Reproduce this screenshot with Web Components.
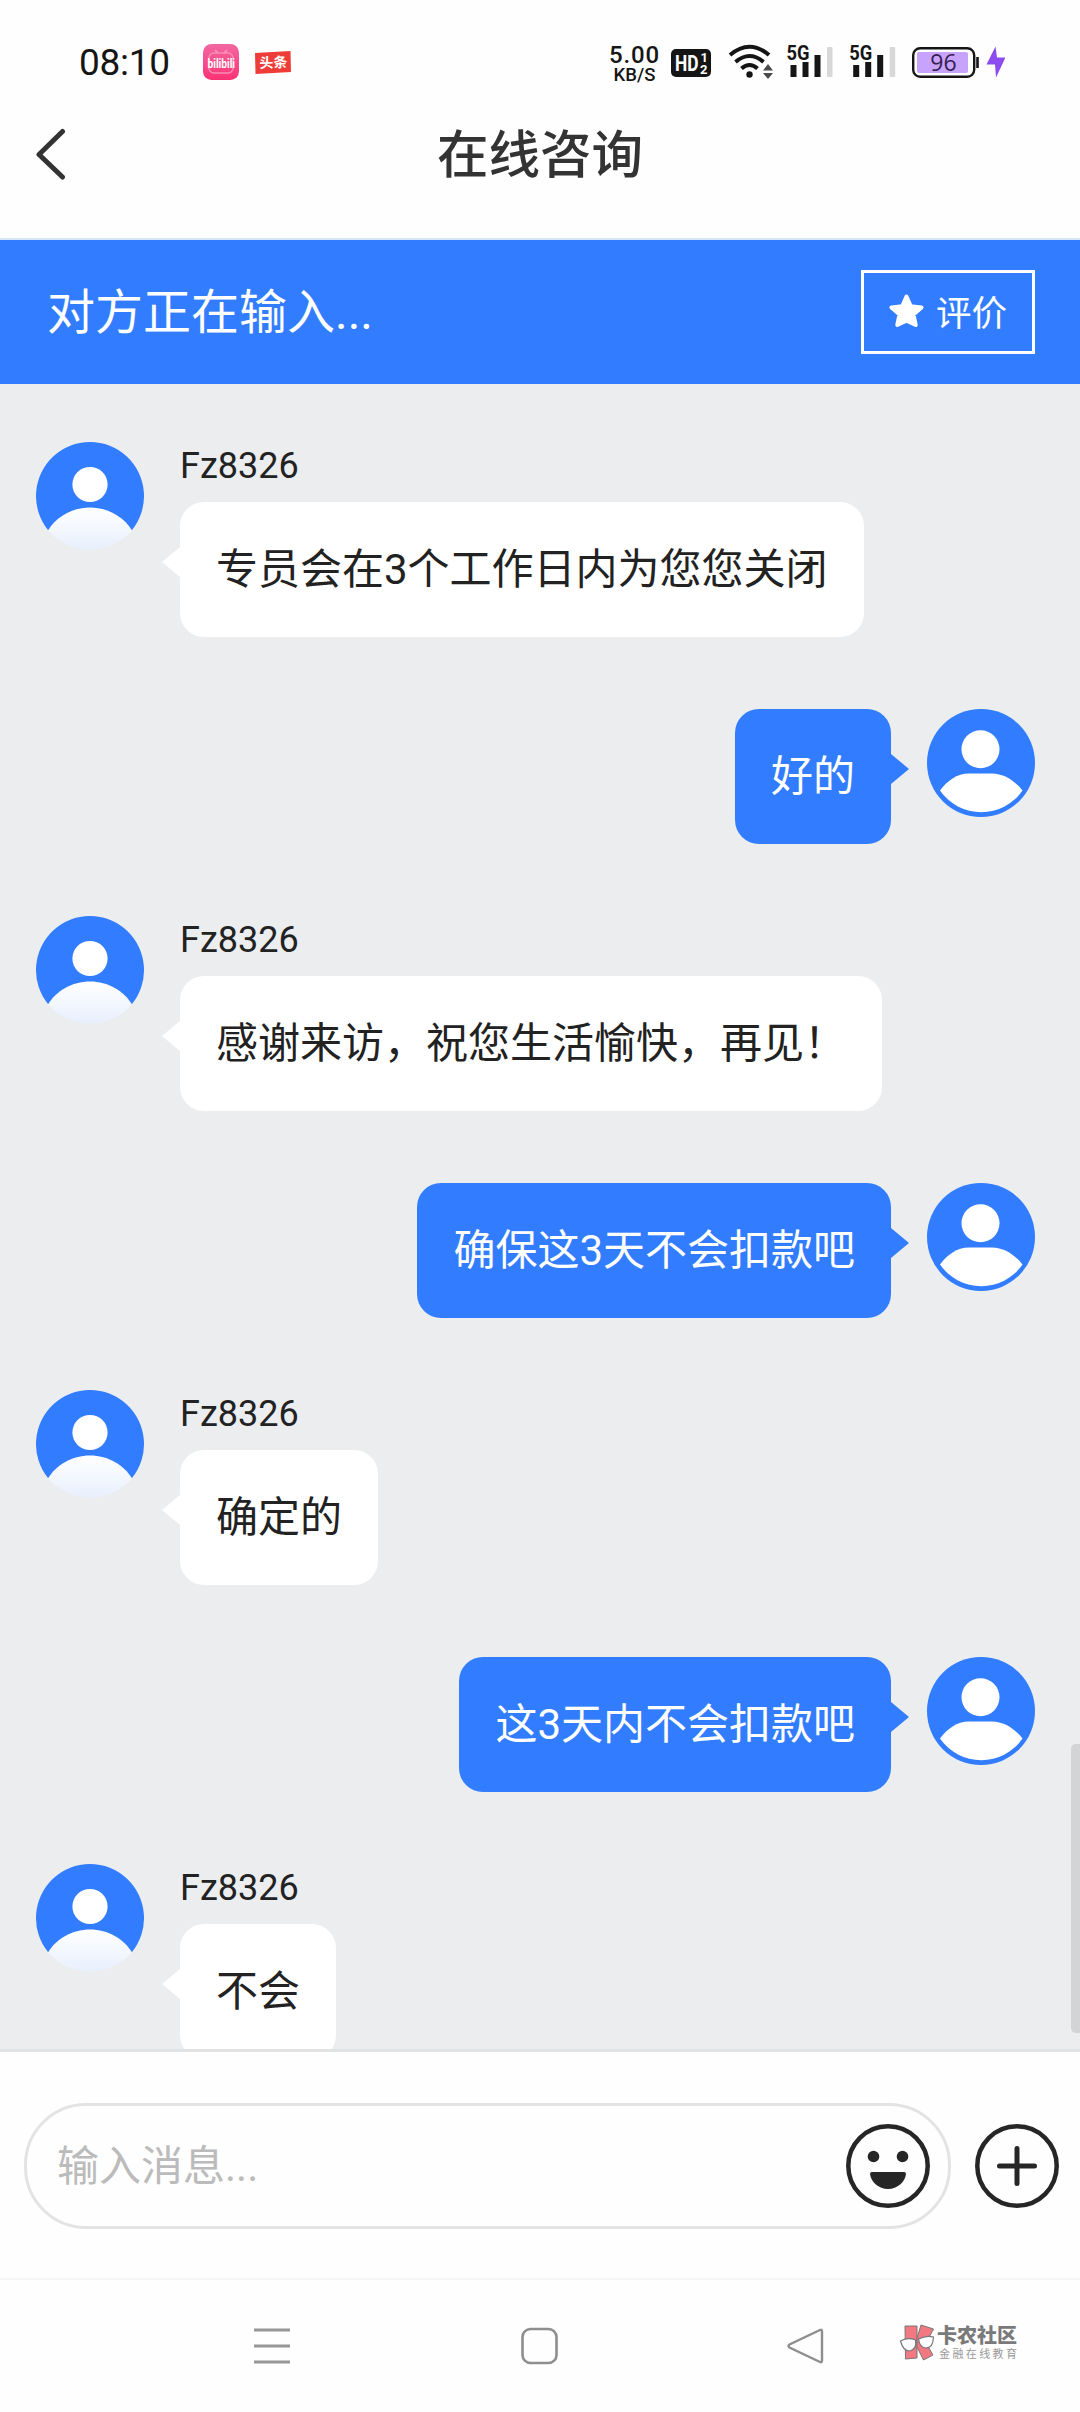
<!DOCTYPE html>
<html lang="zh-CN">
<head>
<meta charset="utf-8">
<title>在线咨询</title>
<style>
  html, body { margin: 0; padding: 0; background: #fff; }
  body { font-family: Roboto, "Noto Sans CJK SC", sans-serif; color: #222; }
</style>
</head>
<body>
<chat-app></chat-app>

<template id="t-app">
  <style>
    :host { display: flex; flex-direction: column; width: 1080px; height: 2412px; overflow: hidden; background: #fefefe; }
    main { flex: none; height: 1665px; box-sizing: border-box; padding: 58px 45px 0 36px; background: #ebedef; overflow: hidden; display: flex; flex-direction: column; gap: 72px; position: relative; }
    chat-message { flex: none; }
    .thumb { position: absolute; right: 0; top: 1360px; width: 9px; height: 289px; background: #d3d4d6; border-radius: 5px 0 0 5px; }
  </style>
  <status-bar></status-bar>
  <title-bar>在线咨询</title-bar>
  <typing-banner>对方正在输入...</typing-banner>
  <main>
    <chat-message name="Fz8326">专员会在3个工作日内为您您关闭</chat-message>
    <chat-message mine>好的</chat-message>
    <chat-message name="Fz8326">感谢来访，祝您生活愉快，再见！</chat-message>
    <chat-message mine>确保这3天不会扣款吧</chat-message>
    <chat-message name="Fz8326">确定的</chat-message>
    <chat-message mine>这3天内不会扣款吧</chat-message>
    <chat-message name="Fz8326">不会</chat-message>
    <div class="thumb"></div>
  </main>
  <message-composer></message-composer>
  <nav-bar></nav-bar>
</template>

<template id="t-status">
  <style>
    :host { display: flex; height: 124px; flex: none; box-sizing: border-box; align-items: flex-start; padding: 40px 75px 0 79px; color: #151515; }
    .time { font-size: 37px; line-height: 46px; width: 124px; letter-spacing: -.3px; }
    svg { display: block; flex: none; }
    .apps { display: flex; gap: 16px; flex: 1; padding-top: 4px; }
    .speed { width: 53px; text-align: center; font-weight: 500; padding-top: 4px; margin-right: 10px; }
    .speed div:first-child { font-size: 24px; line-height: 22px; letter-spacing: .8px; }
    .speed div:last-child { font-size: 18.5px; line-height: 18px; }
  </style>
  <div class="time">08:10</div>
  <div class="apps">
    <svg width="36" height="36" viewBox="0 0 36 36">
      <defs><linearGradient id="p" x1="0" y1="0" x2="0" y2="1"><stop offset="0" stop-color="#f268a2"/><stop offset="1" stop-color="#fb3274"/></linearGradient></defs>
      <rect width="36" height="36" rx="8.5" fill="url(#p)"/>
      <path d="M12 6l3 3M24 6l-3 3" stroke="#fa9ac0" stroke-width="1.6"/>
      <rect x="6" y="9" width="24" height="20" rx="5" fill="none" stroke="#f98bb5" stroke-width="1.4"/>
      <text transform="translate(4.500 24) scale(1 1.3)" font-size="10.500" font-weight="700" fill="#fff" textLength="27.500" lengthAdjust="spacingAndGlyphs" font-family="Roboto, sans-serif">bilibili</text>
    </svg>
    <svg width="36" height="36" viewBox="0 0 36 36">
      <path d="M0 9L35.500 7 36 28 .5 30z" fill="#ee3d38"/>
      <text x="18.300" y="23.500" text-anchor="middle" font-size="14" font-weight="700" fill="#fff" font-family="Noto Sans CJK SC, sans-serif" transform="rotate(-2 18 18)">头条</text>
    </svg>
  </div>
  <div class="speed"><div>5.00</div><div>KB/S</div></div>
  <svg width="334" height="44" viewBox="671 40 334 44">
    <rect x="671" y="49" width="40" height="28" rx="5" fill="#151515"/>
    <text x="675" y="70.500" font-size="22" font-weight="700" fill="#fff" textLength="23.500" lengthAdjust="spacingAndGlyphs" font-family="Roboto, sans-serif">HD</text>
    <g font-size="13" font-weight="700" fill="#fff" font-family="Roboto, sans-serif"><text x="700.500" y="61.500">1</text><text x="700" y="74">2</text></g>
    <g fill="none" stroke="#151515" stroke-width="4"><path d="M730 55q19.500-16.500 39 0M735.500 62q14-12 28 0M741.500 68.500q8-7 16 0"/></g>
    <circle cx="749.500" cy="74.500" r="3.200" fill="#151515"/>
    <path d="M763 70.500l5-6.500 5 6.500zM763 73l5 6 5-6z" fill="#4a4a4a"/>
    <g id="sig">
      <text x="786.500" y="60" font-size="20.500" font-weight="700" fill="#151515" textLength="23" lengthAdjust="spacingAndGlyphs" font-family="Roboto, sans-serif">5G</text>
      <path d="M790.500 65h6v12h-6zM802.500 62h6v15h-6zM814.500 55h6v22h-6z" fill="#151515"/>
      <rect x="827" y="47" width="5.500" height="30" rx="1" fill="#d8d8d8"/>
    </g>
    <use href="#sig" x="62.700"/>
    <rect x="913.200" y="48.200" width="61" height="28.600" rx="7" fill="#fff" stroke="#151515" stroke-width="2.400"/>
    <rect x="917" y="52" width="51" height="21" rx="2" fill="#c8a3fc"/>
    <path d="M977.500 57v11" stroke="#151515" stroke-width="2.600"/>
    <text x="943.500" y="71" text-anchor="middle" font-size="23" fill="#35204f" font-family="Open Sans, sans-serif">96</text>
    <path d="M995.500 46.500l-9 18h8.500l1 13 9.500-20h-8.500z" fill="#8c4cee"/>
  </svg>
</template>

<template id="t-title">
  <style>
    :host { display: flex; flex: none; height: 116px; box-sizing: border-box; border-bottom: 2px solid #d5e4f6; padding: 0 36px; align-items: flex-start; color: #333; }
    svg { display: block; width: 30px; height: 62px; }
    h1 { flex: 1; margin: 0 30px 0 0; text-align: center; font-size: 51.5px; line-height: 63px; font-weight: 500; }
  </style>
  <svg viewBox="0 0 30 62"><path d="M26.500 7.500L3 30.500 26.500 53" fill="none" stroke="#333" stroke-width="5" stroke-linecap="round" stroke-linejoin="round"/></svg>
  <h1><slot></slot></h1>
</template>

<template id="t-banner">
  <style>
    :host { display: flex; flex: none; height: 144px; box-sizing: border-box; padding: 0 45px 0 47px; align-items: center; justify-content: space-between; background: #327dff; color: #fff; font-size: 48px; }
    .status { padding-bottom: 8px; }
    button { all: unset; box-sizing: border-box; display: flex; align-items: center; width: 174px; height: 84px; border: 3px solid #fff; padding-left: 25px; gap: 12px; font-size: 35.5px; }
    button span { padding-bottom: 3px; }
    svg { display: block; width: 35px; height: 35px; margin-bottom: 2px; }
  </style>
  <span class="status"><slot></slot></span>
  <button><svg viewBox="0 0 35 35"><path d="M17.500 2.500l4.300 9.700 10.700 1.200-8 7.100 2.200 10.500-9.200-4.200-9.200 4.200 2.200-10.500-8-7.100 10.700-1.200z" fill="#fff" stroke="#fff" stroke-width="4" stroke-linejoin="round"/></svg><span>评价</span></button>
</template>

<template id="t-avatar">
  <style>
    :host { display: block; width: 108px; height: 109px; flex: none; }
    svg { display: block; }
    :host([mine]) .agent, :host(:not([mine])) .user { display: none; }
  </style>
  <svg class="agent" width="108" height="109" viewBox="0 0 108 109">
    <defs>
      <linearGradient id="g" x1="0" y1="65" x2="0" y2="109" gradientUnits="userSpaceOnUse"><stop offset="0" stop-color="#fff"/><stop offset="1" stop-color="#e7effd"/></linearGradient>
    </defs>
    <path d="M12 88A54 54 0 1 1 96 88z" fill="#327dff"/>
    <circle cx="54" cy="42.500" r="17.600" fill="#fff"/>
    <path d="M12 88.500C20 75 36 65.500 54 65.500S88 75 96 88.500A56 56 0 0 1 12 88.500z" fill="url(#g)"/>
  </svg>
  <svg class="user" width="108" height="108" viewBox="0 0 108 108">
    <circle cx="54" cy="54" r="54" fill="#327dff"/>
    <circle cx="53.500" cy="40.300" r="19" fill="#fff"/>
    <path d="M13 81.500C20 72 30 64.500 42 64.500H65C77 64.500 88 72 95.500 81.500A50 50 0 0 1 13 81.500z" fill="#fff"/>
  </svg>
</template>

<template id="t-message">
  <style>
    :host { display: flex; align-items: flex-start; gap: 36px; height: 195px; }
    :host([mine]) { flex-direction: row-reverse; height: 135px; }
    .col { display: flex; flex-direction: column; align-items: flex-start; }
    .name { height: 60px; font-size: 36px; line-height: 48px; color: #222; }
    :host([mine]) .name { display: none; }
    .bubble { position: relative; box-sizing: border-box; height: 135px; padding: 0 36px; border-radius: 24px; background: #fff; color: #222; font-size: 42px; line-height: 135px; white-space: nowrap; }
    :host([mine]) .bubble { background: #327dff; color: #fff; }
    .bubble::before { content: ""; position: absolute; top: 45px; left: -18px; border: 15px solid transparent; border-left: 0; border-right: 18px solid #fff; }
    :host([mine]) .bubble::before { left: auto; right: -18px; border-right: 0; border-left: 18px solid #327dff; }
  </style>
  <user-avatar></user-avatar>
  <div class="col"><div class="name"></div><div class="bubble"><slot></slot></div></div>
</template>

<template id="t-composer">
  <style>
    :host { display: flex; flex: none; height: 231px; box-sizing: border-box; border-top: 3px solid #e1e2e4; border-bottom: 2px solid #f6f6f6; padding: 51px 21px 0 24px; gap: 24px; align-items: flex-start; background: #fefefe; }
    .field { width: 927px; height: 126px; box-sizing: border-box; border: 3px solid #e3e3e3; border-radius: 62px; display: flex; align-items: center; justify-content: space-between; padding: 0 18px 0 30px; font-size: 42px; color: #bbb; }
    .field span { padding-bottom: 7px; }
    svg { display: block; flex: none; width: 84px; height: 84px; }
    .plus { margin-top: 21px; }
  </style>
  <div class="field"><span>输入消息...</span>
    <svg viewBox="0 0 84 84"><circle cx="42" cy="42" r="39.700" fill="none" stroke="#262626" stroke-width="4.500"/><circle cx="27.500" cy="32.500" r="5.800" fill="#262626"/><circle cx="56.500" cy="32.500" r="5.800" fill="#262626"/><path d="M26 48H58Q60 48 60 50C59 58 51.500 65 42 65S25 58 24 50Q24 48 26 48z" fill="#262626"/></svg>
  </div>
  <svg class="plus" viewBox="0 0 84 84"><circle cx="42" cy="42" r="39.700" fill="none" stroke="#262626" stroke-width="4.500"/><path d="M42 24.500v35M24.500 42h35" stroke="#262626" stroke-width="5" stroke-linecap="round"/></svg>
</template>

<template id="t-nav">
  <style>
    :host { display: flex; flex: none; height: 132px; box-sizing: border-box; padding: 45px 255px 0 253px; justify-content: space-between; align-items: flex-start; position: relative; }
    svg { display: block; }
    .mark { position: absolute; left: 899px; top: 44px; display: flex; gap: 2px; }
    .mark b { display: block; font: 900 20px/22px "Noto Sans CJK SC", sans-serif; color: #7a7a7a; white-space: nowrap; }
    .mark small { display: block; font: 400 11px/14px "Noto Sans CJK SC", sans-serif; letter-spacing: 2.400px; color: #999; white-space: nowrap; padding: 0 0 0 2px; }
  </style>
  <svg width="38" height="42" viewBox="0 0 38 42"><path d="M1 5h36M1 21h36M1 37h36" stroke="#969696" stroke-width="2.800"/></svg>
  <svg width="38" height="42" viewBox="0 0 38 42"><rect x="2.500" y="4" width="34" height="34" rx="8" fill="none" stroke="#8e8e8e" stroke-width="2.600"/></svg>
  <svg width="38" height="42" viewBox="0 0 38 42"><path d="M33 5Q35 4 35 6.500V35.500Q35 38 33 37L2.500 22.500Q.5 21 2.500 19.500z" fill="none" stroke="#8e8e8e" stroke-width="2.400"/></svg>
  <div class="mark">
    <svg width="36" height="37" viewBox="0 0 36 37">
      <g fill="#f27882" stroke="#777" stroke-width="1"><path d="M6 2H18V34L6.500 35z"/><path d="M22 1L34.500 5 27 19 34 31 24.500 36 18 23V14z"/></g>
      <g fill="#fff" stroke="#777" stroke-width="1.200"><path d="M1.500 17Q9 13 16.500 16Q18 25 11 27Q4 27 1.500 17zM19.500 15Q27 11 34.500 13Q34 24 27 24Q21 24 19.500 15z"/></g>
    </svg>
    <div><b>卡农社区</b><small>金融在线教育</small></div>
  </div>
</template>

<script>
  function define(tag, templateId, onConnect) {
    customElements.define(tag, class extends HTMLElement {
      constructor() {
        super();
        this.attachShadow({ mode: "open" }).append(document.getElementById(templateId).content.cloneNode(true));
      }
      connectedCallback() { if (onConnect) onConnect(this); }
    });
  }
  define("status-bar", "t-status");
  define("title-bar", "t-title");
  define("typing-banner", "t-banner");
  define("user-avatar", "t-avatar");
  define("chat-message", "t-message", el => {
    el.shadowRoot.querySelector(".name").textContent = el.getAttribute("name") || "";
    el.shadowRoot.querySelector("user-avatar").toggleAttribute("mine", el.hasAttribute("mine"));
  });
  define("message-composer", "t-composer");
  define("nav-bar", "t-nav");
  define("chat-app", "t-app");
</script>
</body>
</html>
